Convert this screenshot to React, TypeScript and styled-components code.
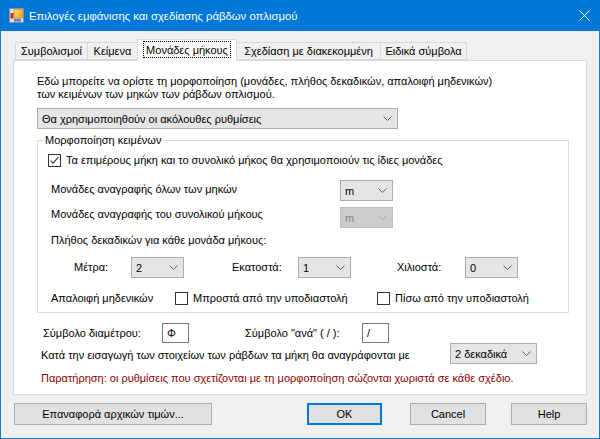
import React from 'react';
import styled, { createGlobalStyle } from 'styled-components';

const GlobalStyle = createGlobalStyle`
  html, body {
    margin: 0;
    padding: 0;
    background: #f0f0f0;
  }
  body {
    font-family: "Liberation Sans", Arial, sans-serif;
    font-size: 11px;
    color: #000;
  }
`;

const Window = styled.div`
  width: 600px;
  height: 439px;
  box-sizing: border-box;
  border: 1px solid #1a7fd4;
  border-top: none;
  background: #f0f0f0;
  display: flex;
  flex-direction: column;
`;

const TitleBar = styled.div`
  height: 31px;
  background: #0078d7;
  color: #fff;
  display: flex;
  align-items: center;
  padding-left: 9px;
  margin: 0 -1px;
  font-size: 11.3px;
`;

const TitleText = styled.span`
  margin-left: 5px;
  margin-top: 1px;
`;

const CloseButton = styled.div`
  margin-left: auto;
  width: 46px;
  height: 31px;
  display: flex;
  align-items: center;
  justify-content: center;
  margin-right: -7px;
`;

const Body = styled.div`
  flex: 1;
  padding: 8px 12px 0 12px;
  display: flex;
  flex-direction: column;
`;

const TabStrip = styled.div`
  display: flex;
  align-items: flex-end;
  height: 21px;
  padding-left: 2px;
`;

const Tab = styled.div<{ $w: number; $active?: boolean }>`
  width: ${({ $w }) => $w}px;
  height: ${({ $active }) => ($active ? 22 : 18)}px;
  margin-bottom: ${({ $active }) => ($active ? -1 : 0)}px;
  box-sizing: border-box;
  border: 1px solid #d9d9d9;
  border-bottom: ${({ $active }) => ($active ? 'none' : '1px solid #d9d9d9')};
  background: ${({ $active }) => ($active ? '#fff' : '#f0f0f0')};
  position: relative;
  z-index: ${({ $active }) => ($active ? 1 : 0)};
  display: flex;
  align-items: center;
  justify-content: center;
  white-space: nowrap;
  padding-bottom: ${({ $active }) => ($active ? 2 : 0)}px;

  & + & {
    margin-left: -1px;
  }
`;

const FocusLabel = styled.span`
  outline: 1px dotted #000;
  padding: 2px 2px 1px;
`;

const Panel = styled.div`
  height: 335px;
  box-sizing: border-box;
  border: 1px solid #d9d9d9;
  background: #fff;
  padding: 14px 0 0 23px;
  display: flex;
  flex-direction: column;
  align-items: flex-start;
`;

const Intro = styled.p`
  margin: 0;
  line-height: 13px;
`;

const ComboBox = styled.div<{ $w: number; $disabled?: boolean }>`
  width: ${({ $w }) => $w}px;
  height: 21px;
  flex: none;
  box-sizing: border-box;
  border: 1px solid ${({ $disabled }) => ($disabled ? '#bfbfbf' : '#adadad')};
  background: ${({ $disabled }) => ($disabled ? '#cccccc' : '#e5e5e5')};
  color: ${({ $disabled }) => ($disabled ? '#838383' : '#000')};
  display: flex;
  align-items: center;
  justify-content: space-between;
  padding: 0 5px 0 4px;
  white-space: nowrap;
`;

const TopCombo = styled(ComboBox)`
  margin-top: 7px;
`;

const GroupBox = styled.fieldset`
  margin: 5px 0 0 0;
  width: 532px;
  box-sizing: border-box;
  border: 1px solid #dcdcdc;
  padding: 7px 0 7px 10px;
  min-inline-size: auto;
`;

const Legend = styled.legend`
  padding: 0 2px;
  margin-left: -5px;
  line-height: 13px;
`;

const Row = styled.div<{ $mt?: number; $pl?: number }>`
  display: flex;
  align-items: flex-start;
  margin-top: ${({ $mt }) => $mt ?? 0}px;
  padding-left: ${({ $pl }) => $pl ?? 0}px;
`;

const CenterRow = styled(Row)`
  align-items: center;
`;

const Label = styled.span<{ $w?: number; $pt?: number; $ml?: number }>`
  display: inline-block;
  width: ${({ $w }) => ($w ? `${$w}px` : 'auto')};
  padding-top: ${({ $pt }) => $pt ?? 0}px;
  margin-left: ${({ $ml }) => $ml ?? 0}px;
  line-height: 13px;
  white-space: nowrap;
  flex: none;
`;

const CheckItem = styled.label<{ $w?: number }>`
  display: flex;
  align-items: center;
  gap: 5px;
  width: ${({ $w }) => ($w ? `${$w}px` : 'auto')};
  white-space: nowrap;
  line-height: 13px;
`;

const CheckBox = styled.span`
  width: 13px;
  height: 13px;
  box-sizing: border-box;
  border: 1px solid #333;
  background: #fff;
  display: flex;
  align-items: center;
  justify-content: center;
  flex: none;
`;

const TextBox = styled.div<{ $ml?: number }>`
  width: 27px;
  height: 20px;
  box-sizing: border-box;
  border: 1px solid #7a7a7a;
  background: #fff;
  padding-left: 4px;
  display: flex;
  align-items: center;
  margin-left: ${({ $ml }) => $ml ?? 0}px;
  flex: none;
`;

const Note = styled.p`
  margin: 8px 0 0 4px;
  line-height: 13px;
  color: #8b0000;
`;

const ButtonRow = styled.div`
  display: flex;
  margin-top: 8px;
`;

const Button = styled.div<{ $w: number; $ml?: number | 'auto'; $focused?: boolean }>`
  width: ${({ $w }) => $w}px;
  height: 22px;
  box-sizing: border-box;
  margin-left: ${({ $ml }) => ($ml === 'auto' ? 'auto' : `${$ml ?? 0}px`)};
  border: ${({ $focused }) => ($focused ? '2px solid #0078d7' : '1px solid #adadad')};
  background: #e1e1e1;
  display: flex;
  align-items: center;
  justify-content: center;
  white-space: nowrap;
`;

const AppIcon = () => (
  <svg width="15" height="15" viewBox="0 0 15 15">
    <defs>
      <linearGradient id="ig" x1="0" y1="0" x2="1" y2="1">
        <stop offset="0" stopColor="#fbe56a" />
        <stop offset="1" stopColor="#e99a1c" />
      </linearGradient>
    </defs>
    <rect x="0.5" y="0.5" width="14" height="14" fill="#d8dce4" stroke="#8a8f99" />
    <rect x="5" y="1.5" width="8.5" height="8.5" fill="url(#ig)" stroke="#c78512" strokeWidth="0.6" />
    <rect x="1.5" y="5" width="3" height="5.5" fill="#d3282a" />
    <rect x="5" y="10.8" width="7" height="2.8" fill="#5b7fd0" />
  </svg>
);

const Chevron = ({ color = '#606060' }: { color?: string }) => (
  <svg width="9" height="5" viewBox="0 0 9 5">
    <polyline points="0.5,0.5 4.5,4.5 8.5,0.5" fill="none" stroke={color} strokeWidth="1" />
  </svg>
);

const Check = () => (
  <svg width="11" height="11" viewBox="0 0 11 11">
    <polyline points="1.5,5.5 4,8.2 9.5,2" fill="none" stroke="#333" strokeWidth="1.1" />
  </svg>
);

const Combo = ({ w, text, disabled }: { w: number; text: string; disabled?: boolean }) => (
  <ComboBox $w={w} $disabled={disabled}>
    <span>{text}</span>
    <Chevron color={disabled ? '#b0b0b0' : '#606060'} />
  </ComboBox>
);

const tabs = [
  { label: 'Συμβολισμοί', w: 73 },
  { label: 'Κείμενα', w: 51 },
  { label: 'Μονάδες μήκους', w: 100, active: true },
  { label: 'Σχεδίαση με διακεκομμένη', w: 145 },
  { label: 'Ειδικά σύμβολα', w: 87 },
];

const App: React.FC = () => {
  return (
    <>
      <GlobalStyle />
      <Window>
        <TitleBar>
          <AppIcon />
          <TitleText>Επιλογές εμφάνισης και σχεδίασης ράβδων οπλισμού</TitleText>
          <CloseButton>
            <svg width="11" height="11" viewBox="0 0 11 11">
              <path d="M0.5 0.5 L10.5 10.5 M10.5 0.5 L0.5 10.5" stroke="#fff" strokeWidth="1" />
            </svg>
          </CloseButton>
        </TitleBar>
        <Body>
          <TabStrip>
            {tabs.map(t => (
              <Tab key={t.label} $w={t.w} $active={t.active}>
                {t.active ? <FocusLabel>{t.label}</FocusLabel> : t.label}
              </Tab>
            ))}
          </TabStrip>
          <Panel>
            <Intro>
              Εδώ μπορείτε να ορίστε τη μορφοποίηση (μονάδες, πλήθος δεκαδικών, απαλοιφή μηδενικών)
              <br />
              των κειμένων των μηκών των ράβδων οπλισμού.
            </Intro>
            <TopCombo $w={361}>
              <span>Θα χρησιμοποιηθούν οι ακόλουθες ρυθμίσεις</span>
              <Chevron />
            </TopCombo>
            <GroupBox>
              <Legend>Μορφοποίηση κειμένων</Legend>
              <CenterRow>
                <CheckItem>
                  <CheckBox><Check /></CheckBox>
                  Τα επιμέρους μήκη και το συνολικό μήκος θα χρησιμοποιούν τις ίδιες μονάδες
                </CheckItem>
              </CenterRow>
              <Row $mt={13} $pl={3}>
                <Label $w={289} $pt={3}>Μονάδες αναγραφής όλων των μηκών</Label>
                <Combo w={53} text="m" />
              </Row>
              <Row $mt={6} $pl={3}>
                <Label $w={289} $pt={1}>Μονάδες αναγραφής του συνολικού μήκους</Label>
                <Combo w={53} text="m" disabled />
              </Row>
              <Row $mt={6} $pl={3}>
                <Label>Πλήθος δεκαδικών για κάθε μονάδα μήκους:</Label>
              </Row>
              <CenterRow $mt={10} $pl={26}>
                <Label $w={57}>Μέτρα:</Label>
                <Combo w={53} text="2" />
                <Label $w={66} $ml={48}>Εκατοστά:</Label>
                <Combo w={53} text="1" />
                <Label $w={68} $ml={46}>Χιλιοστά:</Label>
                <Combo w={53} text="0" />
              </CenterRow>
              <CenterRow $mt={14} $pl={3}>
                <Label $w={124}>Απαλοιφή μηδενικών</Label>
                <CheckItem $w={202}>
                  <CheckBox />
                  Μπροστά από την υποδιαστολή
                </CheckItem>
                <CheckItem>
                  <CheckBox />
                  Πίσω από την υποδιαστολή
                </CheckItem>
              </CenterRow>
            </GroupBox>
            <Row $mt={10} $pl={6}>
              <Label $w={119} $pt={4}>Σύμβολο διαμέτρου:</Label>
              <TextBox>Φ</TextBox>
              <Label $w={117} $pt={4} $ml={56}>Σύμβολο "ανά" ( / ):</Label>
              <TextBox>/</TextBox>
            </Row>
            <Row $pl={4}>
              <Label $w={409} $pt={6}>Κατά την εισαγωγή των στοιχείων των ράβδων τα μήκη θα αναγράφονται με</Label>
              <Combo w={87} text="2 δεκαδικά" />
            </Row>
            <Note>Παρατήρηση: οι ρυθμίσεις που σχετίζονται με τη μορφοποίηση σώζονται χωριστά σε κάθε σχέδιο.</Note>
          </Panel>
          <ButtonRow>
            <Button $w={198} $ml={1}>Επαναφορά αρχικών τιμών...</Button>
            <Button $w={75} $ml="auto" $focused>OK</Button>
            <Button $w={76} $ml={28}>Cancel</Button>
            <Button $w={76} $ml={25}>Help</Button>
          </ButtonRow>
        </Body>
      </Window>
    </>
  );
};

export default App;
